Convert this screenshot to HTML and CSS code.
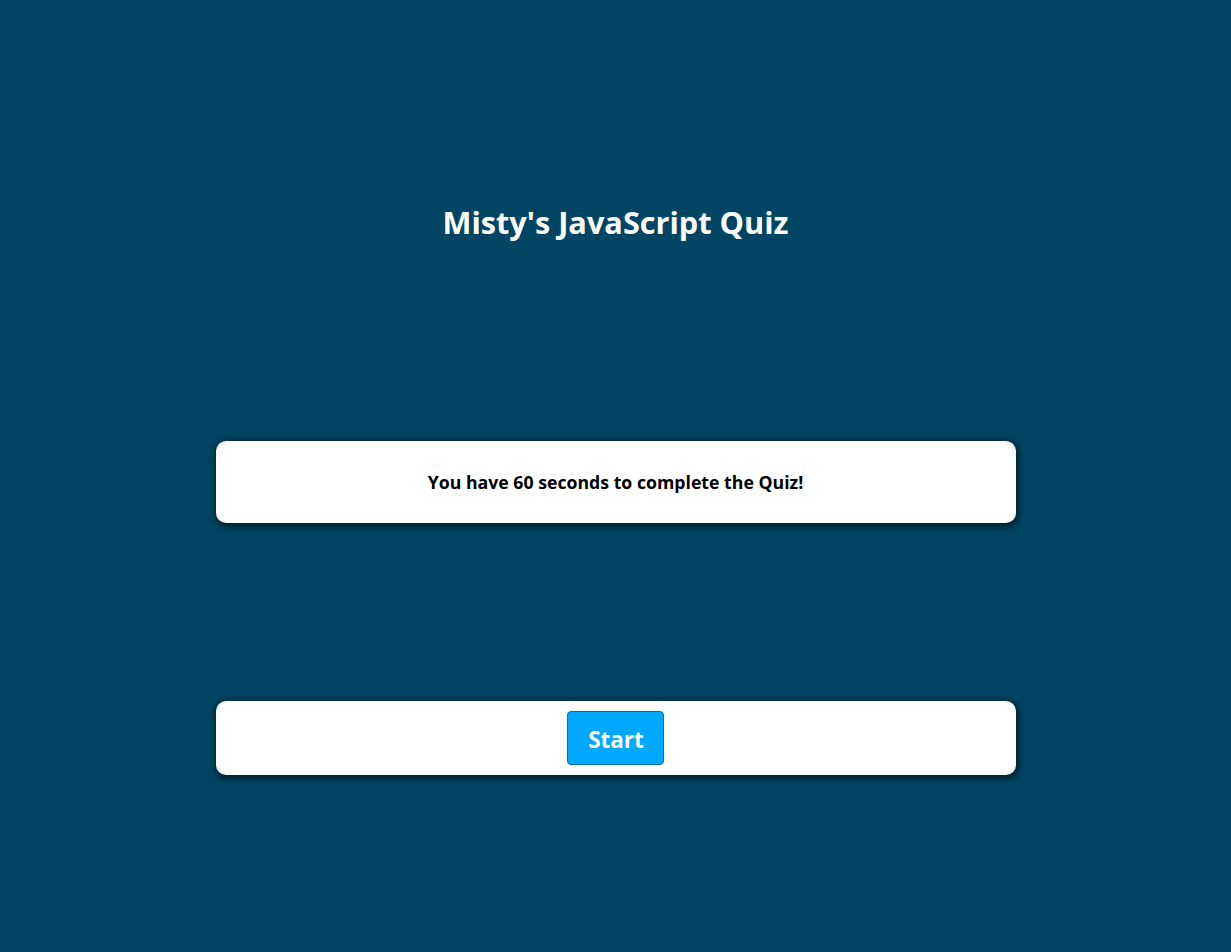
FILE: index.html
```html
<!DOCTYPE html>
<html lang="en">
<head>
<meta charset="utf-8">
<title>Misty's JavaScript Quiz</title>
<link rel="stylesheet" href="styles.css">
</head>
<body>
<header class="header">
  <h1 class="title">Misty's JavaScript Quiz</h1>
</header>
<main class="main">
  <section class="card card-info">
    <p class="info-text">You have 60 seconds to complete the Quiz!</p>
  </section>
  <section class="card card-actions">
    <button class="start-btn" type="button">Start</button>
  </section>
</main>
</body>
</html>
```

FILE: styles.css
```css
html, body {
  margin: 0;
  padding: 0;
}
body {
  background: #004563;
  font-family: "Open Sans", "Noto Sans", sans-serif;
  min-height: 952px;
}
.header {
  display: flex;
  justify-content: center;
  padding-top: 199px;
}
.title {
  margin: 0;
  color: #ffffff;
  font-size: 30.7px;
  font-weight: 700;
  line-height: 46px;
}
.main {
  display: flex;
  flex-direction: column;
  align-items: center;
  padding-top: 196px;
}
.card {
  width: 800px;
  background: #ffffff;
  border-radius: 10px;
  box-shadow: 1px 2px 6px 2px rgba(0, 0, 0, 0.55);
  display: flex;
  justify-content: center;
  align-items: center;
}
.card-info {
  height: 82px;
}
.info-text {
  margin: 0;
  font-size: 17.7px;
  font-weight: 700;
  color: #000000;
}
.card-actions {
  margin-top: 178px;
  height: 74px;
}
.start-btn {
  width: 97px;
  height: 54px;
  background: #00a8ff;
  border: 1px solid #0a6fa8;
  border-radius: 4px;
  color: #ffffff;
  font-family: "Open Sans", "Noto Sans", sans-serif;
  font-size: 22.5px;
  font-weight: 700;
  padding: 3px 0 0 1px;
  line-height: normal;
  cursor: pointer;
}
```
